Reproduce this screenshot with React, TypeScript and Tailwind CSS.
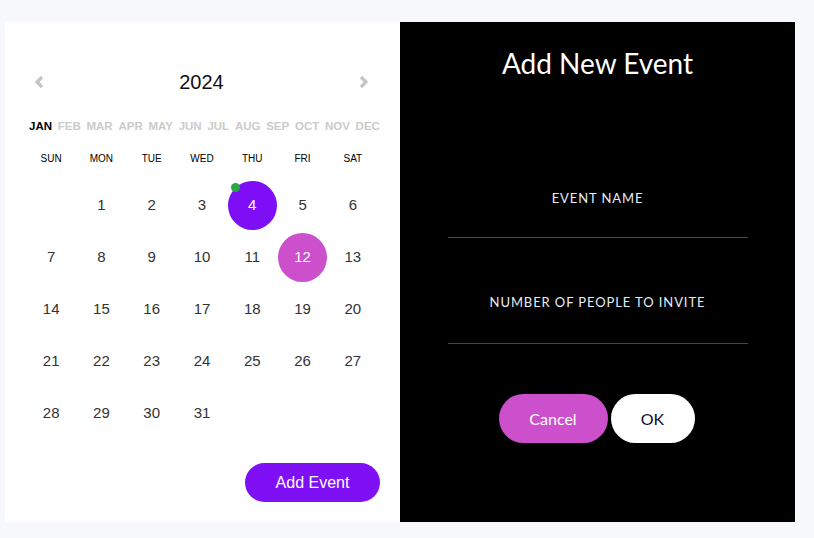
import React from "react";

const months = ["JAN","FEB","MAR","APR","MAY","JUN","JUL","AUG","SEP","OCT","NOV","DEC"];
const weekdays = ["SUN","MON","TUE","WED","THU","FRI","SAT"];

function Day({ n }: { n: number | null }) {
  if (n === null) return <div className="h-[52px]" />;
  if (n === 4) {
    return (
      <div className="h-[52px] flex items-center justify-center">
        <div className="relative w-[49px] h-[49px] rounded-full bg-[#7d0ef5] flex items-center justify-center text-white text-[15px]">
          4
          <span className="absolute left-[3px] top-[2px] w-[9px] h-[9px] rounded-full bg-[#27a844]" />
        </div>
      </div>
    );
  }
  if (n === 12) {
    return (
      <div className="h-[52px] flex items-center justify-center">
        <div className="w-[49px] h-[49px] rounded-full bg-[#cc4fcb] flex items-center justify-center text-white text-[15px]">
          12
        </div>
      </div>
    );
  }
  return (
    <div className="h-[52px] flex items-center justify-center text-[15px] text-[#333]">{n}</div>
  );
}

export default function App() {
  const cells: (number | null)[] = [null];
  for (let i = 1; i <= 31; i++) cells.push(i);
  while (cells.length < 35) cells.push(null);

  return (
    <div className="w-[814px] h-[538px] bg-[#f7f8fc] pt-[22px] pl-[5px]">
      <div className="flex w-[790px] h-[500px]">
        <div className="w-[395px] h-[500px] bg-white pt-[40px] flex flex-col" style={{ fontFamily: '"Liberation Sans", Arial, sans-serif' }}>
          <div className="ml-[21px] w-[352px]">
            <div className="h-[40px] flex items-center justify-between pl-[7px] pr-[8px]">
              <svg width="12" height="14" viewBox="0 0 12 14">
                <polyline points="9,2 4,7 9,12" fill="none" stroke="#c4c4c4" strokeWidth="3.2" />
              </svg>
              <span className="text-[20px] text-[#111]">2024</span>
              <svg width="12" height="14" viewBox="0 0 12 14">
                <polyline points="3,2 8,7 3,12" fill="none" stroke="#c4c4c4" strokeWidth="3.2" />
              </svg>
            </div>
            <div className="mt-[15px] h-[20px] flex items-center justify-between ml-[3px] mr-[-2px] text-[11.5px] font-bold">
              {months.map((m, i) => (
                <span key={m} className={i === 0 ? "text-black" : "text-[#cbcbcb]"}>{m}</span>
              ))}
            </div>
            <div className="mt-[11px] h-[20px] grid grid-cols-7 items-center text-[10px] text-black">
              {weekdays.map((w) => (
                <span key={w} className="text-center">{w}</span>
              ))}
            </div>
            <div className="mt-[11px] grid grid-cols-7">
              {cells.map((n, i) => (
                <Day key={i} n={n} />
              ))}
            </div>
          </div>
          <div className="mt-[24px] flex justify-end pr-[20px]">
            <button className="w-[135px] h-[39px] rounded-full bg-[#7f0ff5] text-white text-[16px]">Add Event</button>
          </div>
        </div>
        <div className="w-[395px] h-[500px] bg-black pt-[24px] flex flex-col items-center" style={{ fontFamily: 'Lato, "Open Sans", sans-serif' }}>
          <div className="h-[34px] leading-[34px] text-[28px] text-white">Add New Event</div>
          <div className="mt-[110px] h-[16px] leading-[16px] text-[13px] tracking-[0.9px] text-[#e6edf6]">EVENT NAME</div>
          <div className="w-[300px] h-[32px] border-b border-[#474747]" />
          <div className="mt-[56px] h-[16px] leading-[16px] text-[13px] tracking-[0.9px] text-[#e6edf6]">NUMBER OF PEOPLE TO INVITE</div>
          <div className="w-[300px] h-[34px] border-b border-[#474747]" />
          <div className="mt-[50px] flex gap-[3px] mr-[2px]">
            <button className="w-[109px] h-[49px] rounded-full bg-[#cc4fcb] text-white text-[16px]">Cancel</button>
            <button className="w-[84px] h-[49px] rounded-full bg-white text-[#0b0b2e] text-[16px]">OK</button>
          </div>
        </div>
      </div>
    </div>
  );
}
